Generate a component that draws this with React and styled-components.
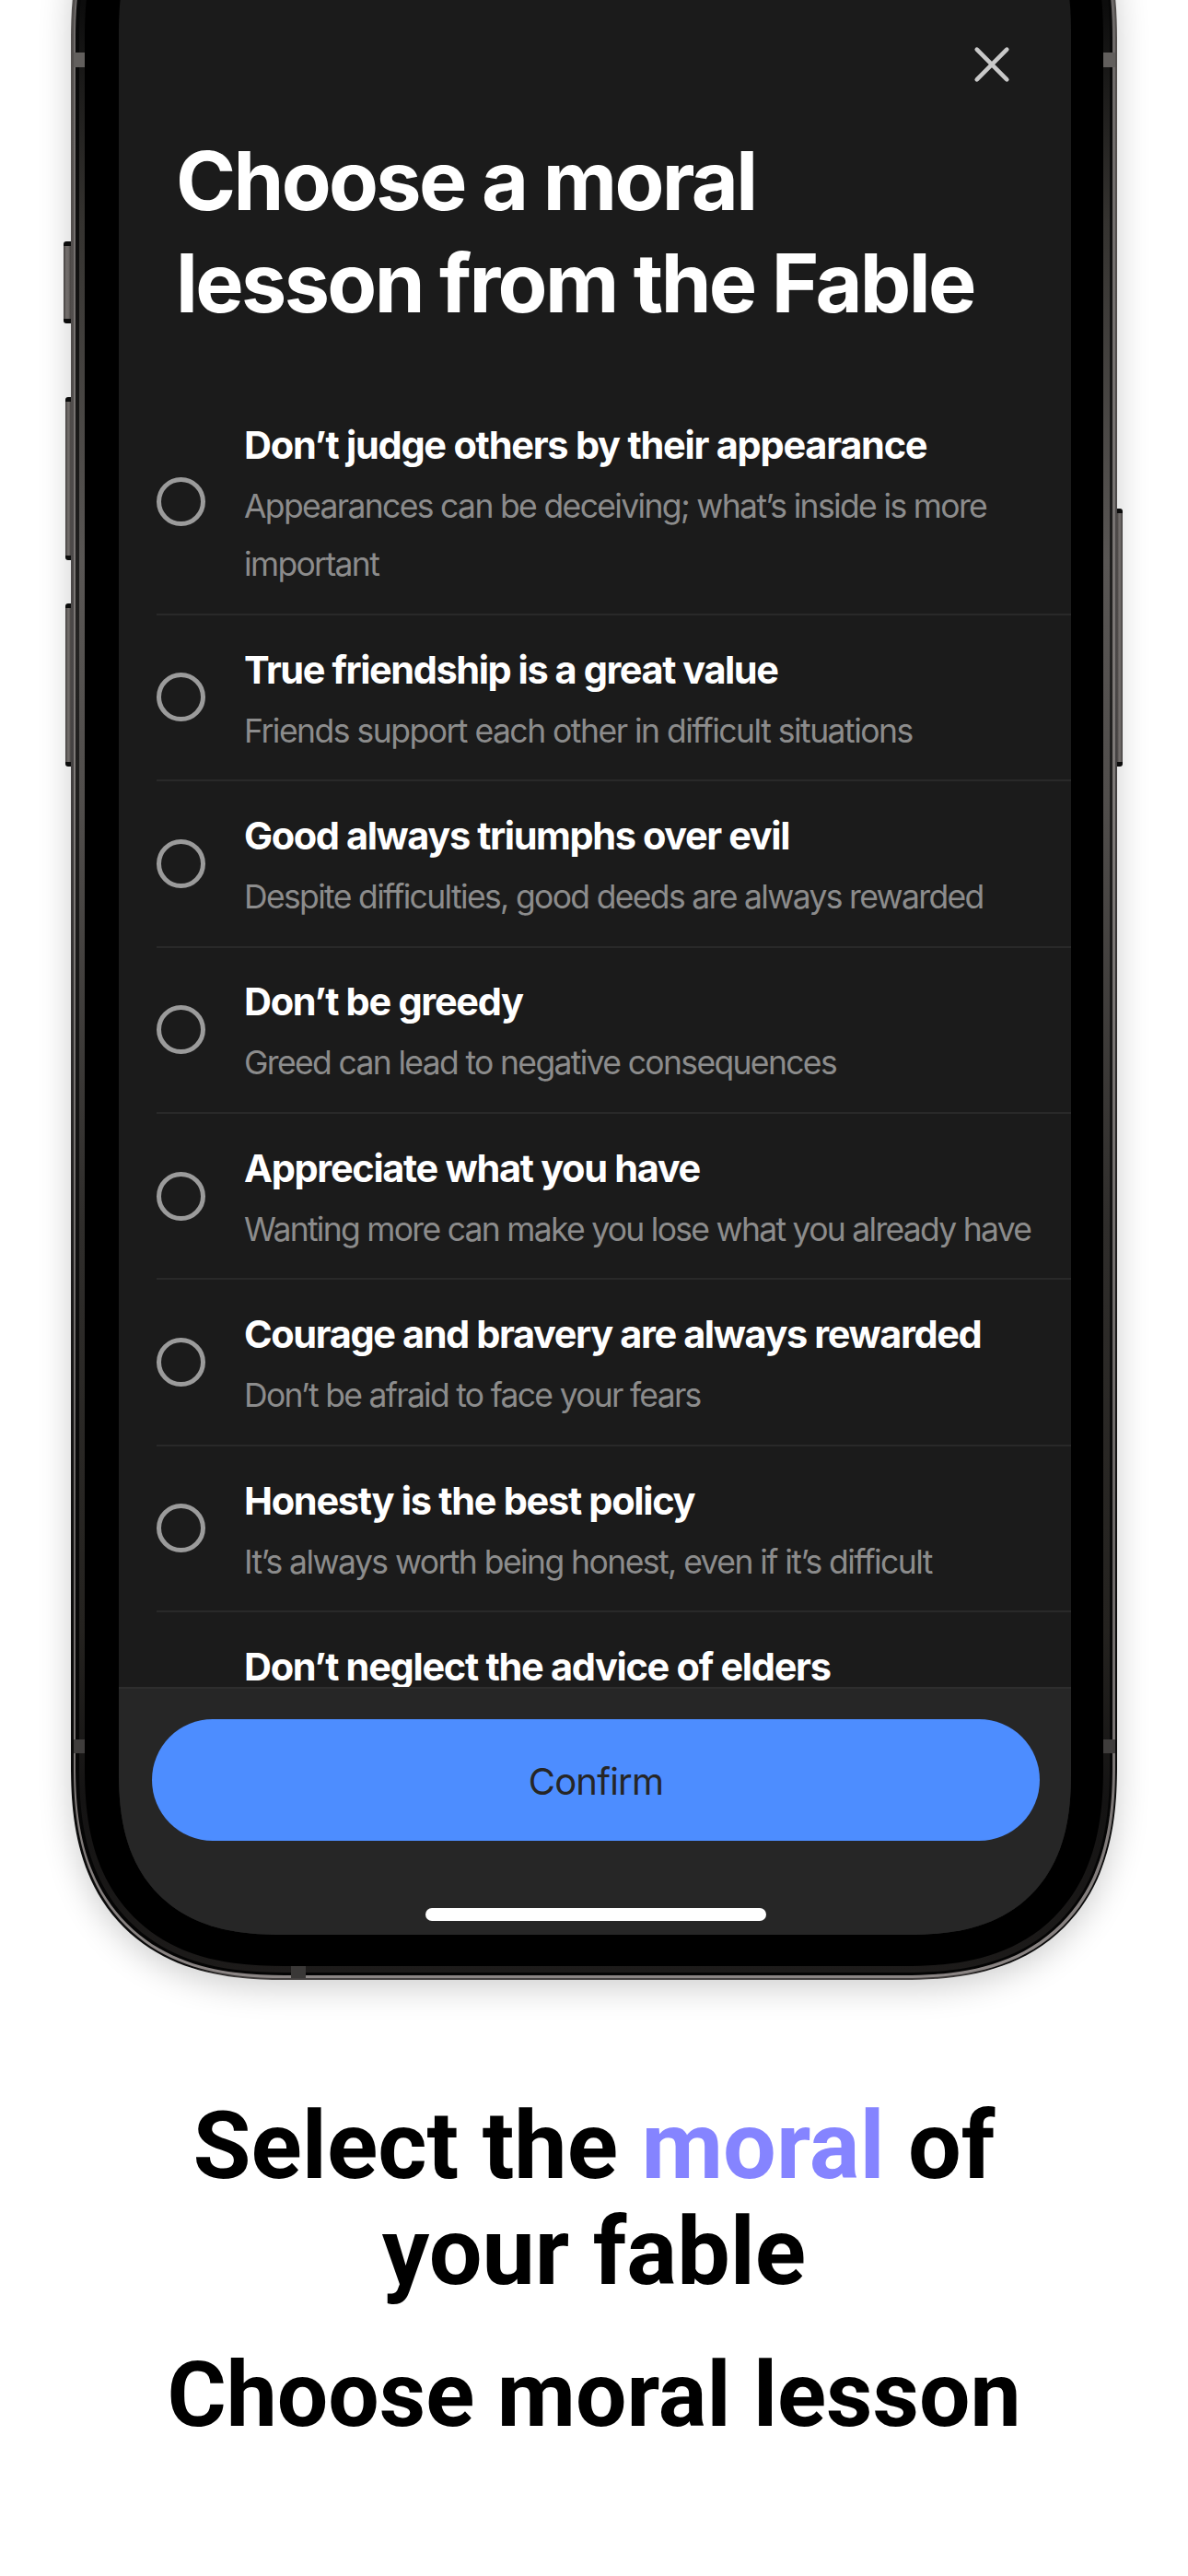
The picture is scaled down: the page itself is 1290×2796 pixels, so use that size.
import React from "react";
import styled, { createGlobalStyle } from "styled-components";

const GlobalStyle = createGlobalStyle`
  *, *::before, *::after { box-sizing: border-box; }
  body { margin: 0; background: #fff; }
`;

const Page = styled.main`
  display: flex;
  flex-direction: column;
  align-items: center;
  width: 1290px;
  height: 2796px;
  overflow: hidden;
  background: #fff;
  font-family: Inter, "Noto Sans", sans-serif;
`;

/* ---- device ---- */

const Device = styled.div`
  position: relative;
  display: flex;
  flex: none;
  width: 1136px;
  height: 2339px;
  margin-top: -190px;
`;

const Ring = styled.div`
  display: flex;
  flex: 1;
  min-width: 0;
  padding: ${(p) => p.$pad};
  border-radius: ${(p) => p.$radius}px;
  corner-shape: superellipse(1.29);
  background: ${(p) => p.$fill};
  box-shadow: ${(p) => p.$shadow || "none"};
`;

const Screen = styled.section`
  display: flex;
  flex-direction: column;
  flex: 1;
  min-width: 0;
  overflow: hidden;
  border-radius: 176px;
  corner-shape: superellipse(1.29);
  background: #1b1b1b;
`;

const SideButton = styled.span`
  position: absolute;
  top: ${(p) => p.$top}px;
  ${(p) => p.$side}: ${(p) => -p.$depth}px;
  width: ${(p) => p.$depth}px;
  height: ${(p) => p.$height}px;
  border: solid #0c0c0c;
  border-width: 5px 0;
  border-radius: ${(p) => (p.$side === "left" ? "3px 0 0 3px" : "0 3px 3px 0")};
  background: linear-gradient(
    ${(p) => (p.$side === "left" ? "90deg" : "270deg")},
    #3f3c3b 0,
    #75706e 3px,
    #6a6664 70%,
    #45413f 100%
  );
`;

const AntennaBand = styled.span`
  position: absolute;
  top: ${(p) => p.$top}px;
  ${(p) => p.$side}: ${(p) => p.$offset}px;
  width: ${(p) => p.$width}px;
  height: ${(p) => p.$height}px;
  background: ${(p) => p.$color};
`;

/* ---- screen content ---- */

const TopBar = styled.header`
  display: flex;
  flex: none;
  justify-content: flex-end;
  align-items: flex-end;
  height: 234px;
  padding-right: 63px;
`;

const CloseButton = styled.button`
  display: flex;
  width: 46px;
  height: 46px;
  padding: 0;
  border: 0;
  background: none;
  color: #c9c9c9;
`;

const Heading = styled.h1`
  flex: none;
  margin: 48px 0 0;
  padding-left: 62px;
  color: #fff;
  font-size: 88px;
  font-weight: 650;
  line-height: 111px;
  letter-spacing: -2.62px;
`;

const List = styled.ul`
  flex: 1;
  min-height: 0;
  margin: 61px 0 0;
  padding: 0 0 0 41px;
  overflow: hidden;
  list-style: none;
`;

const Row = styled.li`
  display: flex;
  align-items: center;
  gap: 42px;
  min-height: ${(p) => (p.$tall ? 243.8 : 180.4)}px;
  border-bottom: 2px solid #292929;
`;

const Radio = styled.span`
  flex: none;
  width: 53px;
  height: 53px;
  border: 5.5px solid #9b9b9b;
  border-radius: 50%;
`;

const Copy = styled.div`
  flex: 1;
  align-self: flex-start;
  padding: 25.8px 34px 21.2px 0;
`;

const Title = styled.h2`
  margin: 0;
  color: #fff;
  font-size: 41.5px;
  font-weight: 690;
  line-height: 67px;
  letter-spacing: ${(p) => p.$tracking}px;
  white-space: nowrap;
`;

const Description = styled.p`
  margin: 1px 0 0;
  color: #8c8c8c;
  font-size: 35.5px;
  line-height: 63.4px;
  letter-spacing: ${(p) => p.$tracking}px;
`;

const Footer = styled.footer`
  display: flex;
  flex: none;
  flex-direction: column;
  align-items: center;
  justify-content: space-between;
  height: 269px;
  padding: 33px 34px 15.5px 36px;
  border-top: 2px solid #2e2e2e;
  background: #262626;
`;

const ConfirmButton = styled.button`
  width: 100%;
  height: 131.5px;
  padding: 3px 0 0;
  border: 0;
  border-radius: 66px;
  background: #4d8dff;
  color: #262626;
  font-family: inherit;
  font-size: 40px;
  font-weight: 440;
  letter-spacing: -0.8px;
`;

const HomeIndicator = styled.span`
  width: 370px;
  height: 13.5px;
  border-radius: 7px;
  background: #fff;
`;

/* ---- caption ---- */

const Caption = styled.div`
  display: flex;
  flex-direction: column;
  gap: 40px;
  margin-top: 123px;
  color: #000;
  font-family: Roboto, sans-serif;
  font-weight: 700;
  line-height: 115px;
  text-align: center;
`;

const CaptionTitle = styled.p`
  width: 960px;
  margin: 0;
  font-size: 102.4px;
`;

const CaptionSubtitle = styled.p`
  margin: 0;
  font-size: 98.3px;
`;

const Accent = styled.span`
  color: #8584ff;
`;

const lessons = [
  { title: "Don’t judge others by their appearance", text: "Appearances can be deceiving; what’s inside is more important", t: -1.25, d: -1.65 },
  { title: "True friendship is a great value", text: "Friends support each other in difficult situations", t: -1.44, d: -1.51 },
  { title: "Good always triumphs over evil", text: "Despite difficulties, good deeds are always rewarded", t: -1.4, d: -1.66 },
  { title: "Don’t be greedy", text: "Greed can lead to negative consequences", t: -1.3, d: -1.65 },
  { title: "Appreciate what you have", text: "Wanting more can make you lose what you already have", t: -1.32, d: -1.71 },
  { title: "Courage and bravery are always rewarded", text: "Don’t be afraid to face your fears", t: -1.4, d: -1.71 },
  { title: "Honesty is the best policy", text: "It’s always worth being honest, even if it’s difficult", t: -1.3, d: -1.56 },
  { title: "Don’t neglect the advice of elders", t: -1.3, tall: true },
];

const edge =
  "linear-gradient(180deg, #4a4746 0%, #55514f 14%, #4a4747 40%, #1c1b1b 68%, #0b0b0b 85%, #0b0b0b 99.4%, #4b4746 100%)";
const highlight = "linear-gradient(180deg, #6b6766 0%, #7d7977 45%, #6b6766 80%, #8b8584 100%)";
const groove = "linear-gradient(180deg, #050505 0%, #0a0a0a 14%, #242322 38%, #0a0a0a 75%, #040404 100%)";
const band =
  "linear-gradient(180deg, #0c0c0c 8%, #34322f 18%, #595654 34%, #514e4c 45%, #2f2d2b 65%, #24221f 84%, #141313 92%, #1d1b1a 100%)";

function CloseIcon() {
  return (
    <svg width="46" height="46" viewBox="0 0 46 46" fill="none" stroke="currentColor" strokeWidth="4.6" strokeLinecap="round">
      <path d="M6.7 6.7 39.3 39.3M39.3 6.7 6.7 39.3" />
    </svg>
  );
}

function Lesson({ item }) {
  return (
    <Row $tall={item.tall}>
      <Radio />
      <Copy>
        <Title $tracking={item.t}>{item.title}</Title>
        {item.text && <Description $tracking={item.d}>{item.text}</Description>}
      </Copy>
    </Row>
  );
}

export default function App() {
  return (
    <Page>
      <GlobalStyle />
      <Device>
        <Ring $pad="2.5px" $radius={232} $fill={edge} $shadow="0 8px 36px rgba(0,0,0,0.2)">
          <Ring $pad="2.5px" $radius={229} $fill={highlight}>
            <Ring $pad="3.5px" $radius={227} $fill={groove}>
              <Ring $pad="6.5px" $radius={223} $fill={band}>
                <Ring $pad="34px 35px 34px 37px" $radius={216} $fill="#000">
                  <Screen>
                    <TopBar>
                      <CloseButton aria-label="Close">
                        <CloseIcon />
                      </CloseButton>
                    </TopBar>
                    <Heading>
                      Choose a moral
                      <br />
                      lesson from the Fable
                    </Heading>
                    <List>
                      {lessons.map((item) => (
                        <Lesson key={item.title} item={item} />
                      ))}
                    </List>
                    <Footer>
                      <ConfirmButton>Confirm</ConfirmButton>
                      <HomeIndicator />
                    </Footer>
                  </Screen>
                </Ring>
              </Ring>
            </Ring>
          </Ring>
        </Ring>
        <AntennaBand $side="left" $offset={2.5} $top={247} $width={12.5} $height={15.5} $color="#625f5d" />
        <AntennaBand $side="right" $offset={2.5} $top={247} $width={12.5} $height={15.5} $color="#625f5d" />
        <AntennaBand $side="left" $offset={2.5} $top={2077.5} $width={12.5} $height={15.5} $color="#3f3d3c" />
        <AntennaBand $side="right" $offset={2.5} $top={2077.5} $width={12.5} $height={15.5} $color="#3f3d3c" />
        <AntennaBand $side="left" $offset={239} $top={2324} $width={16} $height={13} $color="#3a3837" />
        <SideButton $side="left" $depth={8} $top={452} $height={89} />
        <SideButton $side="left" $depth={6} $top={621} $height={177} />
        <SideButton $side="left" $depth={6} $top={845} $height={177} />
        <SideButton $side="right" $depth={6} $top={742} $height={280} />
      </Device>
      <Caption>
        <CaptionTitle>
          Select the <Accent>moral</Accent> of your fable
        </CaptionTitle>
        <CaptionSubtitle>Choose moral lesson</CaptionSubtitle>
      </Caption>
    </Page>
  );
}
